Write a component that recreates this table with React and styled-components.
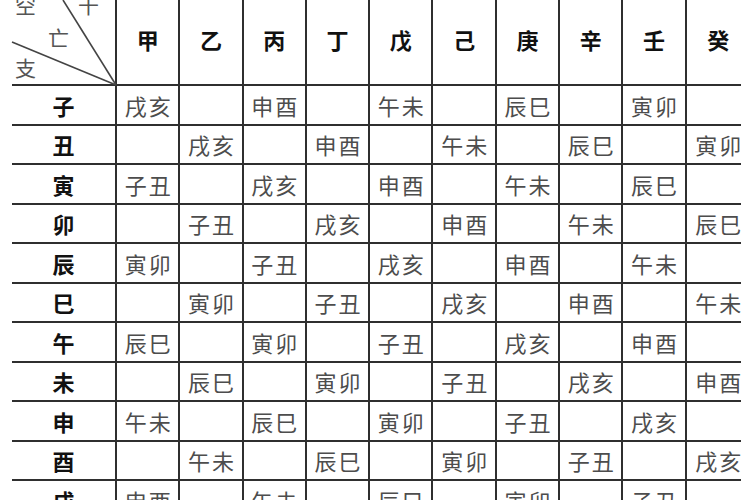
import React from 'react';
import styled, { createGlobalStyle } from 'styled-components';

const GlobalStyle = createGlobalStyle`
  html, body {
    margin: 0;
    padding: 0;
    background: #fff;
    width: 750px;
    height: 500px;
    overflow: hidden;
  }
`;

const STEMS = ['甲', '乙', '丙', '丁', '戊', '己', '庚', '辛', '壬', '癸'];
const BRANCHES = ['子', '丑', '寅', '卯', '辰', '巳', '午', '未', '申', '酉', '戌', '亥'];
const PAIRS = ['子丑', '寅卯', '辰巳', '午未', '申酉', '戌亥'];

// 空亡: only where stem and branch share yin/yang
const voidOf = (row, col) => {
  if ((row + col) % 2 !== 0) return '';
  return PAIRS[(5 + Math.floor(row / 2) - Math.floor(col / 2) + 6) % 6];
};

const LINE = '#2f2f2f';

const Table = styled.div`
  display: grid;
  grid-template-columns: 105px repeat(10, 63.3px);
  grid-template-rows: 86px;
  grid-auto-rows: 39.5px;
  margin-left: 12px;
  font-family: "Noto Sans CJK SC", "Noto Sans CJK TC", sans-serif;
`;

// last column: no right rule, bottom rule stops short of the edge
const Cell = styled.div`
  box-sizing: border-box;
  display: flex;
  align-items: center;
  justify-content: center;
  line-height: 1;
  border-right: ${({ $last }) => ($last ? 'none' : `2px solid ${LINE}`)};
  border-bottom: ${({ $last }) => ($last ? '2px solid transparent' : `2px solid ${LINE}`)};
  background: ${({ $last }) =>
    $last ? `linear-gradient(${LINE}, ${LINE}) left bottom / 54px 2px no-repeat` : 'none'};
  background-origin: border-box;
  background-clip: border-box;
`;

const HeadCell = styled(Cell)`
  padding-bottom: 6px;
  font-size: 22px;
  font-weight: 700;
  color: #111;
`;

const LabelCell = styled(Cell)`
  font-size: 22px;
  font-weight: 700;
  color: #111;
`;

const ValueCell = styled(Cell)`
  font-size: 22px;
  font-weight: 400;
  color: #4d4d4d;
  letter-spacing: 2px;
  padding-left: 2px;
`;

const Corner = styled(Cell)`
  position: relative;
  overflow: visible;
`;

const Diagonals = styled.svg`
  position: absolute;
  left: 0;
  top: 0;
  width: 105px;
  height: 86px;
  overflow: visible;
`;

const CornerText = styled.span`
  position: absolute;
  left: ${({ $x }) => $x}px;
  top: ${({ $y }) => $y}px;
  font-size: 21px;
  font-weight: 400;
  color: #555;
  line-height: 1;
`;

export default function App() {
  return (
    <>
      <GlobalStyle />
      <Table>
        <Corner>
          <Diagonals viewBox="0 0 105 86">
            <line x1="51" y1="0" x2="104" y2="85" stroke="#444" strokeWidth="1.6" />
            <line x1="0" y1="42" x2="104" y2="85" stroke="#444" strokeWidth="1.6" />
          </Diagonals>
          <CornerText $x={3} $y={-6}>空</CornerText>
          <CornerText $x={66} $y={-6}>干</CornerText>
          <CornerText $x={36} $y={27}>亡</CornerText>
          <CornerText $x={3} $y={57}>支</CornerText>
        </Corner>
        {STEMS.map((s, i) => (
          <HeadCell key={s} $last={i === STEMS.length - 1}>{s}</HeadCell>
        ))}
        {BRANCHES.map((b, r) => (
          <React.Fragment key={b}>
            <LabelCell>{b}</LabelCell>
            {STEMS.map((s, c) => (
              <ValueCell key={s} $last={c === STEMS.length - 1}>
                {voidOf(r, c)}
              </ValueCell>
            ))}
          </React.Fragment>
        ))}
      </Table>
    </>
  );
}
